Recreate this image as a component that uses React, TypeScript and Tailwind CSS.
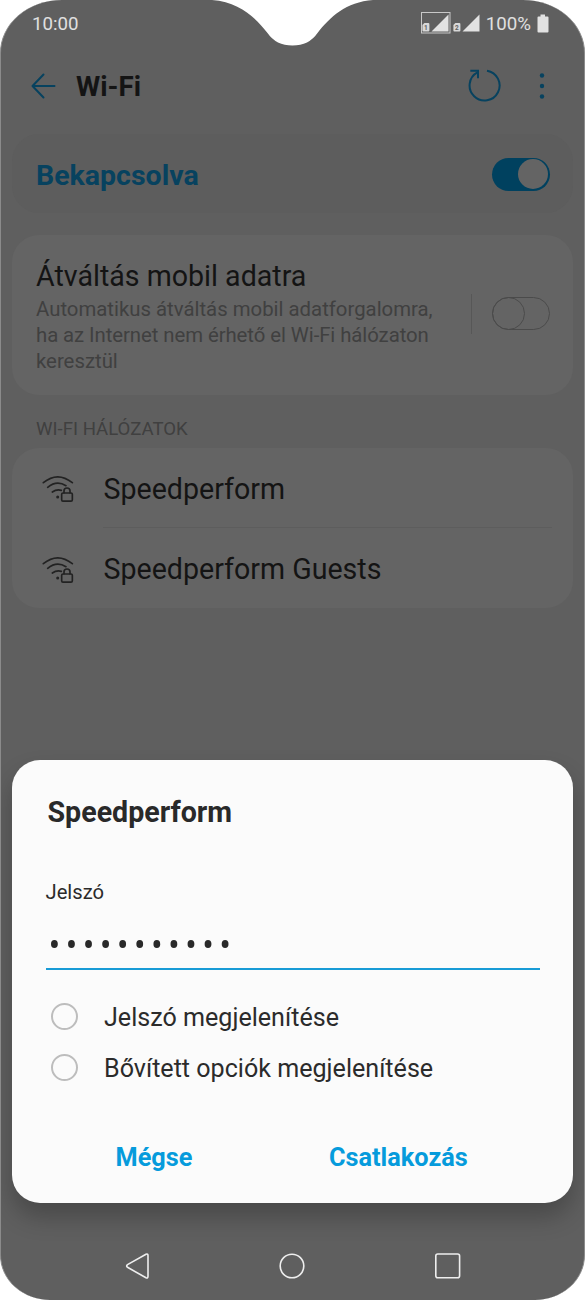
import React from "react";

function SignalIcon({ sim, framed }: { sim: string; framed?: boolean }) {
  return (
    <svg width="30" height="22" viewBox="0 0 30 22" className="shrink-0">
      {framed && <rect x="0.5" y="0.5" width="28.5" height="20.5" fill="none" stroke="#c8c8c8" />}
      <path d="M27.5 2.5V19.5H10.5Z" fill="#e2e2e2" />
      <path d="M3.4 11H7.4Q8.4 11 8.4 12V18.5Q8.4 19.5 7.4 19.5H2.4Q1.4 19.5 1.4 18.5V13Z" fill="#d8d8d8" />
      <text x="3.1" y="17.8" fontSize="6.5" fontWeight="700" fontFamily="Roboto, sans-serif" fill="#5f5f5f">
        {sim}
      </text>
    </svg>
  );
}

function WifiLockIcon() {
  return (
    <svg width="32" height="28" viewBox="126 197 96 84" fill="none" stroke="#222" strokeWidth="5" strokeLinecap="round" className="mt-[3px] shrink-0">
      <path d="M130 220Q173 185 217 220" />
      <path d="M143 234Q170 212 198 229" />
      <path d="M157 248Q170 239 184 243" />
      <circle cx="173" cy="263" r="4.5" fill="#222" stroke="none" />
      <rect x="185" y="251" width="32" height="24.5" rx="4" />
      <path d="M192 250V244Q192 236 201 236Q210 236 210 244V250" />
    </svg>
  );
}

function NetworkRow({ name }: { name: string }) {
  return (
    <li className="flex h-[79.5px] items-center pl-[30px]">
      <WifiLockIcon />
      <span className="mt-[3px] ml-[29.5px] text-[28.6px] text-[#141414]">{name}</span>
    </li>
  );
}

function Option({ label }: { label: string }) {
  return (
    <label className="flex h-[51px] items-center">
      <span className="ml-[5px] h-[27px] w-[27px] rounded-full border-2 border-[#bdbdbd]" />
      <span className="ml-[26.5px] pt-[3px] text-[25.1px] text-[#2b2b2b]">{label}</span>
    </label>
  );
}

export default function App() {
  return (
    <div className="h-[1300px] w-[585px] overflow-hidden bg-white font-['Roboto',sans-serif] leading-none whitespace-nowrap">
      <div className="relative flex h-[1299.5px] flex-col overflow-hidden rounded-[62px_62px_50px_50px/53px_53px_45px_45px] border-x border-[#8b8b8b] bg-[#5f5f5f]">
        <svg className="absolute top-0 left-[211px]" width="161" height="46" viewBox="212 0 161 46">
          <path d="M212 0C239 2 255 17 267.5 33Q276 45.500 292.5 45.500Q309 45.500 317.5 33C330 17 346 2 373 0Z" fill="#fff" />
        </svg>

        <header className="flex h-[46px] shrink-0 items-center justify-between pr-[35px] pl-[31px] text-[#e0e0e0]">
          <span className="pt-[3px] text-[18.7px]">10:00</span>
          <div className="flex items-center">
            <SignalIcon sim="1" framed />
            <span className="ml-[1px] flex"><SignalIcon sim="2" /></span>
            <span className="ml-[4px] pt-[3px] text-[18.7px]">100%</span>
            <svg className="ml-[6px]" width="12" height="19" viewBox="0 0 12 19">
              <path d="M3.500 0.500H8V2.500H10.500Q11.500 2.500 11.500 3.500V17.500Q11.500 18.500 10.500 18.500H1.500Q0.500 18.500 0.500 17.500V3.500Q0.500 2.500 1.500 2.500H3.500Z" fill="#e2e2e2" />
            </svg>
          </div>
        </header>

        <nav className="flex h-[80px] shrink-0 items-center pr-[39px] pl-[30px]">
          <svg width="25" height="26" viewBox="0 0 25 26" fill="none" stroke="#07425f" strokeWidth="2" strokeLinecap="round" strokeLinejoin="round">
            <path d="M12.500 1.500L1.500 13L12.500 24.500M1.500 13H23.500" />
          </svg>
          <h1 className="ml-[20px] pt-px text-[27.700px] font-bold text-[#141414]">Wi-Fi</h1>
          <svg className="mb-[2px] ml-auto" width="34" height="34" viewBox="552 204 102 102" fill="none" stroke="#07425f" strokeWidth="6">
            <path d="M609 212A45 45 0 1 1 580 217" />
            <path d="M559 212H582V235" />
          </svg>
          <svg className="mb-px ml-[37px]" width="6" height="28" viewBox="0 0 6 28" fill="#07425f">
            <circle cx="3" cy="3.500" r="2.200" />
            <circle cx="3" cy="14" r="2.200" />
            <circle cx="3" cy="24.500" r="2.200" />
          </svg>
        </nav>

        <section className="mx-[11px] mt-[8px] flex h-[79px] shrink-0 items-center justify-between rounded-[27px] bg-[#5d5d5d] pr-[23.5px] pl-[24px]">
          <span className="pt-[6px] text-[28.500px] font-bold text-[#07425f]">Bekapcsolva</span>
          <span className="mt-px flex h-[33px] w-[58px] items-center justify-end rounded-full bg-[#00415f] pr-[1.5px]">
            <span className="h-[30px] w-[30px] rounded-full bg-[#646464]" />
          </span>
        </section>

        <section className="mx-[11px] mt-[21.500px] flex h-[160.500px] shrink-0 rounded-[27px] bg-[#646464] pr-[23.5px] pl-[24px]">
          <div className="pt-[25px]">
            <h2 className="text-[28.600px] leading-[32px] text-[#141414]">Átváltás mobil adatra</h2>
            <p className="mt-[4px] text-[20.350px] leading-[26.400px] text-[#404040]">
              Automatikus átváltás mobil adatforgalomra,
              <br />
              <span className="tracking-[-0.07px]">ha az Internet nem érhető el Wi-Fi hálózaton</span>
              <br />
              keresztül
            </p>
          </div>
          <div className="mb-[2px] ml-auto flex items-center">
            <span className="h-[40px] w-px bg-[#575757]" />
            <span className="ml-[20px] flex h-[33px] w-[58px] rounded-full border-[1.5px] border-[#4b4b4b]">
              <span className="-mt-px -ml-px h-[33px] w-[33px] rounded-full border-[1.5px] border-[#4b4b4b]" />
            </span>
          </div>
        </section>

        <h3 className="ml-[35px] flex h-[53px] shrink-0 items-center pt-[16px] text-[18.600px] text-[#404040]">WI-FI HÁLÓZATOK</h3>

        <ul className="mx-[11px] h-[160px] shrink-0 rounded-[27px] bg-[#646464]">
          <NetworkRow name="Speedperform" />
          <li className="-mt-px mr-[21px] mb-px ml-[91px] h-px bg-[#5d5d5d]" />
          <NetworkRow name="Speedperform Guests" />
        </ul>

        <form className="mr-[11px] ml-[10.5px] mt-[151.500px] flex h-[443px] shrink-0 flex-col rounded-[28px] bg-[#fbfbfb] pr-[33.5px] pl-[34px] shadow-[0_14px_24px_rgba(0,0,0,0.24)]">
          <h2 className="mt-[36px] ml-[2px] text-[28.600px] leading-[32px] font-bold text-[#292929]">Speedperform</h2>
          <div className="mt-[52px] text-[20.200px] leading-[24px] text-[#2b2b2b]">Jelszó</div>
          <svg className="mt-[34.5px] ml-[4px] shrink-0" width="190" height="12" viewBox="0 0 190 12" fill="#292929">
            {Array.from({ length: 11 }, (_, i) => (
              <ellipse key={i} cx={4.400 + i * 17.070} cy="6" rx="3.400" ry="3.900" />
            ))}
          </svg>
          <div className="mt-[17.5px] h-[2px] shrink-0 bg-[#189bd6]" />
          <div className="mt-[21px]">
            <Option label="Jelszó megjelenítése" />
            <Option label="Bővített opciók megjelenítése" />
          </div>
          <div className="mt-[49px] flex pl-[70px] text-[25.300px] leading-[32px] font-bold text-[#069bdc]">
            <button type="button">Mégse</button>
            <button type="button" className="ml-[136.5px]">Csatlakozás</button>
          </div>
        </form>

        <footer className="mt-[49px] flex shrink-0 items-center pl-[123px]">
          <svg width="26" height="28" viewBox="0 0 26 28" fill="none" stroke="#eee" strokeWidth="1.600" strokeLinejoin="round">
            <path d="M22 2.200L3.500 12.600Q1.800 14 3.500 15.300L22 25.800Q24 26.500 24 24.300V3.700Q24 1.500 22 2.200Z" />
          </svg>
          <svg className="ml-[128px]" width="28" height="28" viewBox="0 0 28 28" fill="none" stroke="#eee" strokeWidth="1.600">
            <circle cx="14" cy="14" r="11.800" />
          </svg>
          <svg className="ml-[128px]" width="28" height="28" viewBox="0 0 28 28" fill="none" stroke="#eee" strokeWidth="1.600">
            <rect x="1.800" y="2" width="23.800" height="23.800" rx="2" />
          </svg>
        </footer>
      </div>
    </div>
  );
}
